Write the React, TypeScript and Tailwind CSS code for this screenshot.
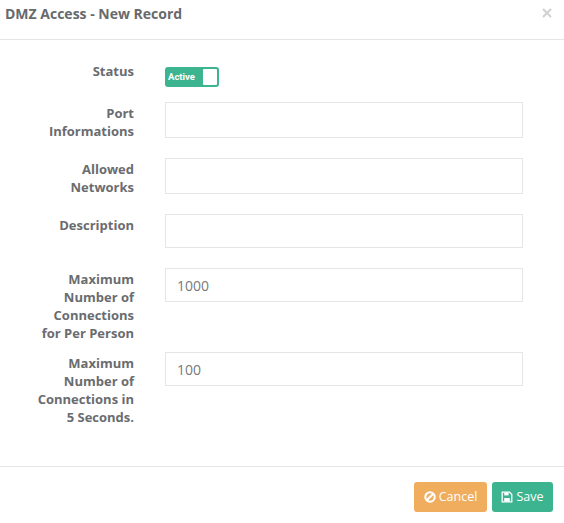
import React from "react";

function Row({ label, h, value, className }: { label: React.ReactNode; h: string; value?: string; className: string }) {
  return (
    <div className={`flex items-start ${className}`}>
      <div className="w-[134px] pt-[2px] text-right text-[13px] leading-[18px] font-bold text-[#6a6c6f] shrink-0">{label}</div>
      <div className={`ml-[31px] w-[358px] ${h} border border-[#e5e6e7] bg-white pl-[11px] pr-[12px] flex items-center text-[14px] text-[#777a7d]`}>{value}</div>
    </div>
  );
}

export default function App() {
  return (
    <div className="w-[564px] h-[523px] bg-white flex flex-col overflow-hidden font-['Open_Sans',sans-serif]">
      <header className="h-[40px] shrink-0 border-b border-[#e5e5e5] flex items-start justify-between pl-[5px] pr-[12px]">
        <h1 className="text-[14px] leading-[18px] mt-[5px] font-bold text-[#676a6c]">DMZ Access - New Record</h1>
        <span className="mt-[3px] text-[#d2d2d2]">
          <svg width="10" height="10" viewBox="0 0 10 10" className="mt-[5px]"><path d="M1 1L9 9M9 1L1 9" stroke="currentColor" strokeWidth="2.2" /></svg>
        </span>
      </header>
      <main className="flex-1 pt-[20px]">
        <div className="flex items-start h-[42px]">
          <div className="w-[134px] pt-[2px] text-right text-[13px] leading-[18px] font-bold text-[#6a6c6f]">Status</div>
          <div className="ml-[31px] mt-[7px] w-[54px] h-[20px] rounded-[3px] bg-[#3cb48f] flex items-center justify-between pl-[3px] pr-[2px]">
            <span className="text-[9.5px] font-bold text-white font-['Roboto',sans-serif]">Active</span>
            <span className="w-[14px] h-[16px] bg-white rounded-[1px]" />
          </div>
        </div>
        <Row label={<>Port<br />Informations</>} h="h-[36px]" className="h-[56px]" />
        <Row label={<>Allowed<br />Networks</>} h="h-[36px]" className="h-[56px]" />
        <Row label="Description" h="h-[34px]" className="h-[54px]" />
        <Row label={<>Maximum<br />Number of<br />Connections<br />for Per Person</>} h="h-[34px]" value="1000" className="h-[84px]" />
        <Row label={<>Maximum<br />Number of<br />Connections in<br />5 Seconds.</>} h="h-[34px]" value="100" className="h-[84px]" />
      </main>
      <footer className="h-[57px] shrink-0 border-t border-[#e5e5e5] flex items-start justify-end gap-[5px] pt-[15px] pr-[11px]">
        <button className="w-[73px] h-[30px] rounded-[3px] bg-[#f0ad5e] text-white text-[12.5px] flex items-center justify-center gap-[3px]">
          <svg width="12" height="12" viewBox="0 0 12 12" fill="none"><circle cx="6" cy="6" r="4.7" stroke="white" strokeWidth="2.1" /><path d="M3 9L9 3" stroke="white" strokeWidth="2.1" /></svg>
          Cancel
        </button>
        <button className="w-[61px] h-[30px] rounded-[3px] bg-[#3cb48f] text-white text-[12.5px] flex items-center justify-center gap-[3px]">
          <svg width="12" height="12" viewBox="0 0 12 12" fill="none"><path d="M1.2 1.2H8.6L10.8 3.4V10.8H1.2Z" stroke="white" strokeWidth="1.3" /><path d="M3.2 1.5H7.6V4.4H3.2Z" fill="white" /><path d="M3.2 7H8.8V10.5H3.2Z" fill="white" /></svg>
          Save
        </button>
      </footer>
    </div>
  );
}
